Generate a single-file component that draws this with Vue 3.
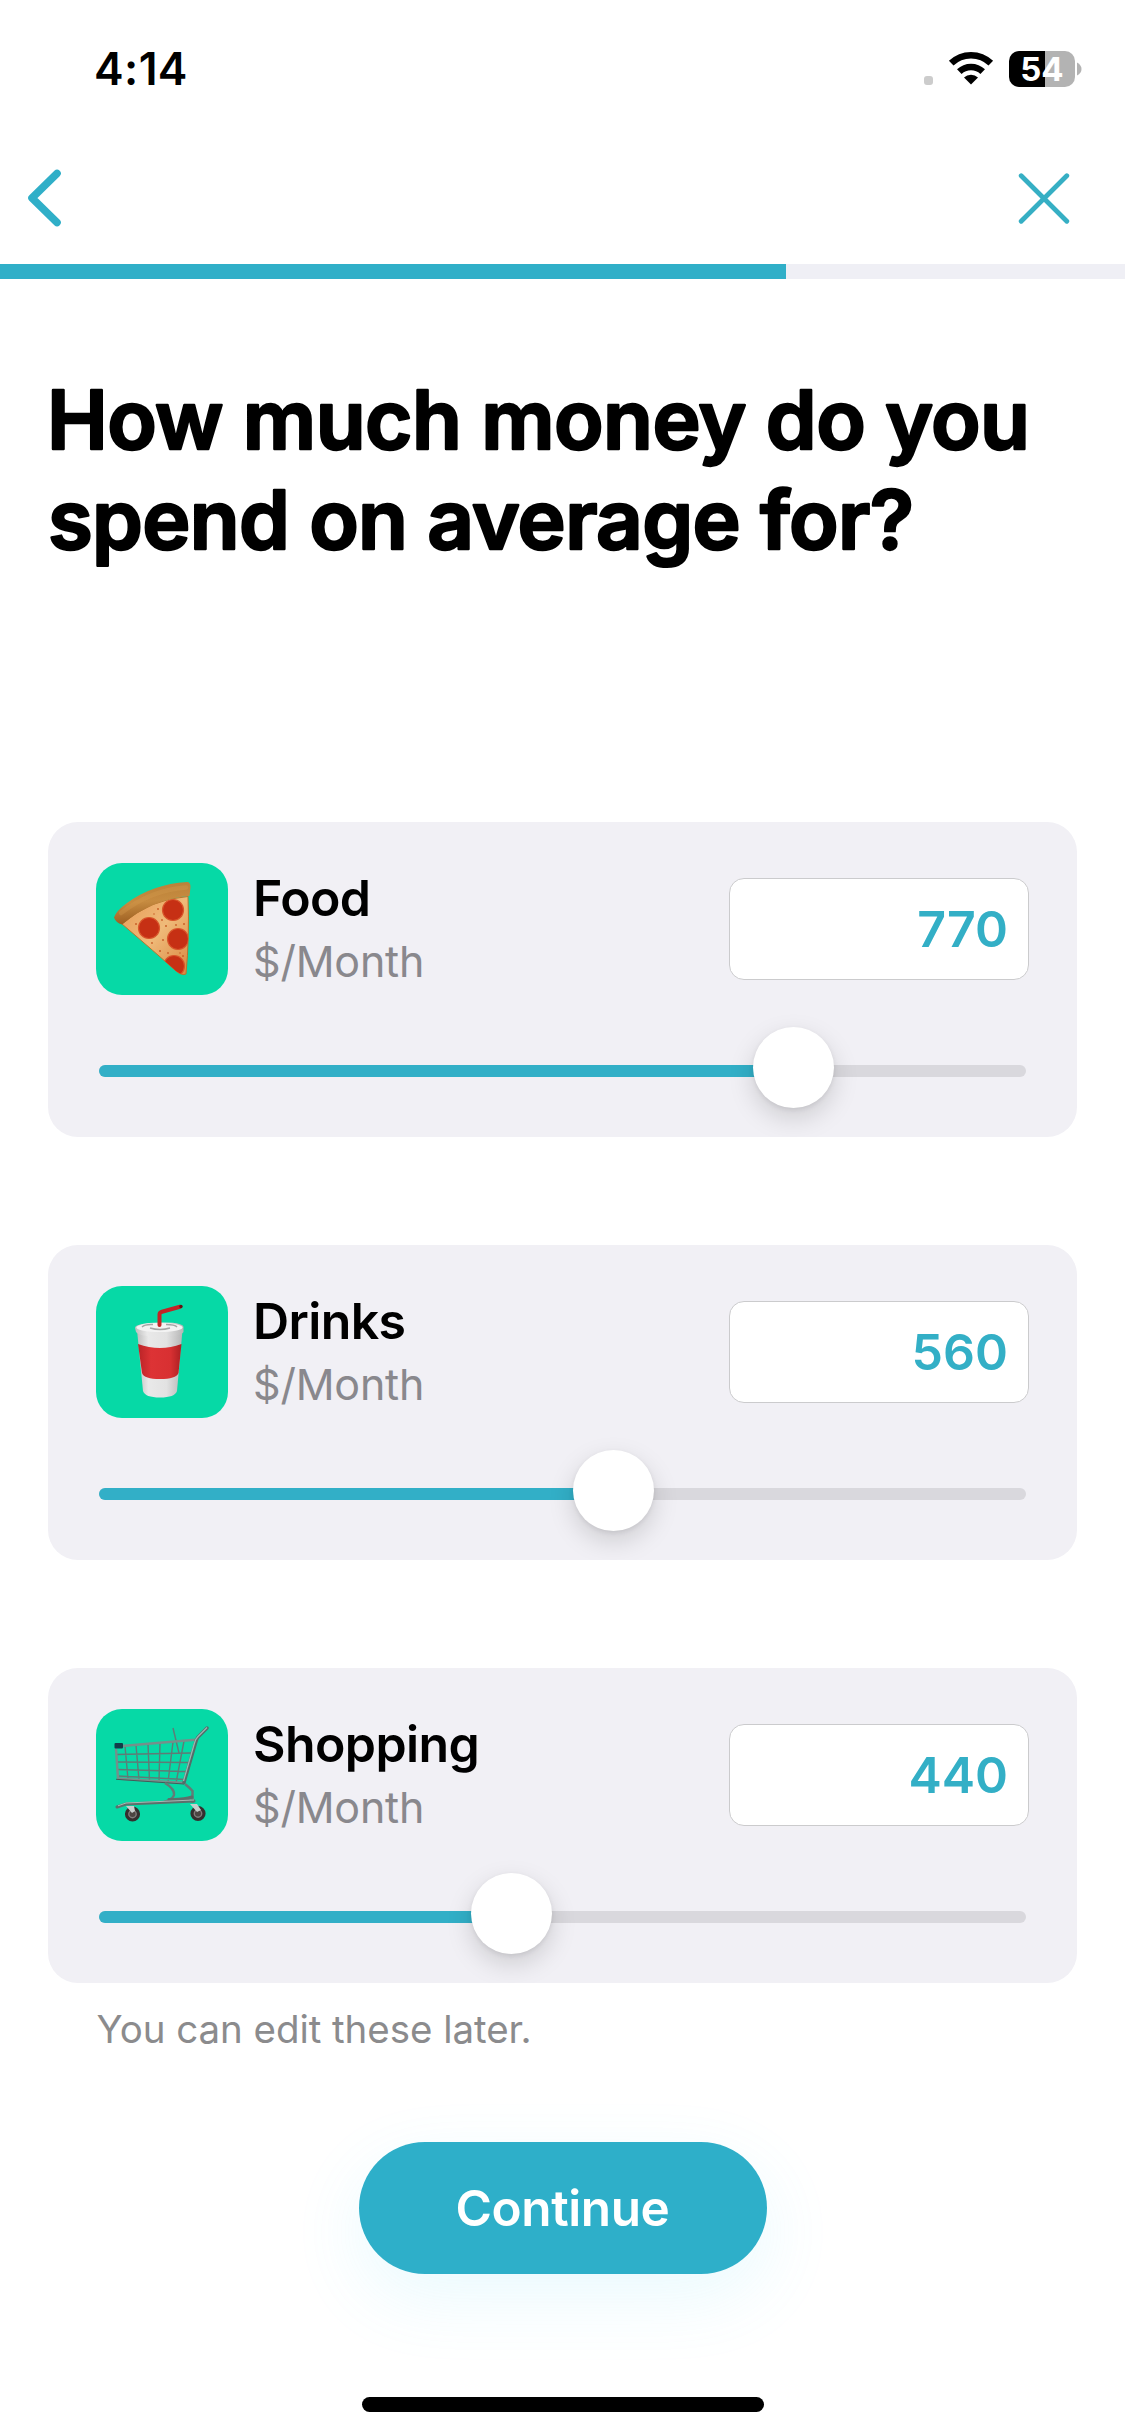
<script setup>
const items = [
  { id: 'food', name: 'Food', amount: 770, position: 74.92 },
  { id: 'drinks', name: 'Drinks', amount: 560, position: 55.5 },
  { id: 'shopping', name: 'Shopping', amount: 440, position: 44.5 },
]
</script>

<template>
  <div class="screen">
    <header class="status">
      <span class="time">4:14</span>
      <div class="indicators">
        <i class="signal"></i>
        <svg class="wifi" viewBox="0 0 46 34" width="46" height="34">
          <path d="M3.2 12.2A28.5 28.5 0 0 1 42.8 12.2M11.3 20.6A17 17 0 0 1 34.7 20.6" fill="none" stroke="#000" stroke-width="6.6" />
          <path d="M23 33.5 16 26.6A10 10 0 0 1 30 26.6Z" />
        </svg>
        <div class="battery">
          <div class="level"><b>54</b></div>
          <svg viewBox="0 0 5 14" width="5" height="14"><path d="M0 0.5Q4.500 3 4.500 7T0 13.5Z" fill="#b3b3b3" /></svg>
        </div>
      </div>
    </header>

    <nav class="nav">
      <svg viewBox="0 0 40 64" width="40" height="64"><path d="M33 7.5 8 32 33 56.5" fill="none" stroke="#30afc8" stroke-width="7.6" stroke-linecap="round" stroke-linejoin="round" /></svg>
      <svg viewBox="0 0 52 52" width="52" height="52"><path d="M3.2 3.7 48.8 49.3M48.8 3.7 3.2 49.3" stroke="#36afc4" stroke-width="4.8" stroke-linecap="round" /></svg>
    </nav>

    <div class="progress"><div class="progress-fill"></div></div>

    <h1 class="title">
      <svg viewBox="0 0 1029 220" width="1029" height="220">
        <text x="-1" y="67.500" textLength="983">How much money do you</text>
        <text x="0" y="167.500" textLength="866">spend on average for?</text>
      </svg>
    </h1>

    <main class="cards">
      <section v-for="item in items" :key="item.id" class="card">
        <div class="row">
          <div class="tile">
            <svg v-if="item.id === 'food'" viewBox="0 0 132 132" width="132" height="132">
              <defs>
                <linearGradient id="crust" x1="0.4" y1="0" x2="0.55" y2="1">
                  <stop offset="0" stop-color="#b98037" /><stop offset="0.45" stop-color="#c68b40" /><stop offset="1" stop-color="#96581d" />
                </linearGradient>
                <linearGradient id="cheese" x1="0" y1="0" x2="1" y2="1">
                  <stop offset="0" stop-color="#e79a55" /><stop offset="0.5" stop-color="#efba79" /><stop offset="1" stop-color="#d98740" />
                </linearGradient>
                <clipPath id="slice"><path d="M26 61Q54 36 92 33.500Q93.500 75 90 111Q86 112 80 108Q60 90 26 61Z" /></clipPath>
              </defs>
              <path d="M26 61Q54 36 92 33.500Q93.500 75 90 111Q86 113 80 108Q60 90 26 61Z" fill="url(#cheese)" stroke="#b8752e" stroke-width="1" />
              <g clip-path="url(#slice)">
                <g fill="#c63014" stroke="#d9562b" stroke-width="1.200">
                  <circle cx="77" cy="47" r="10.500" /><circle cx="53" cy="65" r="10.500" /><circle cx="82" cy="76" r="10.500" /><circle cx="78" cy="103" r="10.500" />
                </g>
                <g fill="#c9622a">
                  <circle cx="62" cy="46" r="1" /><circle cx="66" cy="57" r="0.900" /><circle cx="70" cy="63" r="1" /><circle cx="58" cy="51" r="0.800" /><circle cx="67" cy="77" r="1" /><circle cx="64" cy="88" r="1.100" /><circle cx="72" cy="90" r="0.900" /><circle cx="87" cy="93" r="1" /><circle cx="88" cy="61" r="1" /><circle cx="40" cy="61" r="1" /><circle cx="80" cy="62" r="0.900" /><circle cx="56" cy="80" r="0.900" /><circle cx="84" cy="90" r="0.800" />
                </g>
              </g>
              <path d="M18 54.500Q20 48 31 40Q57 21 91 19Q94.500 19 94.500 24L93.500 33Q57 35.500 26 61.500Q20 60 18 54.500Z" fill="url(#crust)" />
              <path d="M25 50Q55 27 90 24.500" fill="none" stroke="#d39a4e" stroke-width="4.500" stroke-linecap="round" opacity="0.350" />
            </svg>

            <svg v-else-if="item.id === 'drinks'" viewBox="0 0 132 132" width="132" height="132">
              <defs>
                <linearGradient id="cup" x1="0" x2="1">
                  <stop offset="0" stop-color="#bdbdbd" /><stop offset="0.250" stop-color="#e9e9e9" /><stop offset="0.650" stop-color="#e2e2e2" /><stop offset="1" stop-color="#b5b5b5" />
                </linearGradient>
                <linearGradient id="sleeve" x1="0" x2="1">
                  <stop offset="0" stop-color="#b92427" /><stop offset="0.300" stop-color="#dd3335" /><stop offset="0.750" stop-color="#d83032" /><stop offset="1" stop-color="#ab2022" />
                </linearGradient>
              </defs>
              <path d="M41 44 47 105Q49 111.500 64 111.500T81 105L86.500 44Z" fill="url(#cup)" />
              <path d="M42 58Q64 66 85.500 58L82.500 87Q80 93 64 93T46 87Z" fill="url(#sleeve)" />
              <path d="M39 42Q39 37 64 36.500T87.500 42V46Q85 50.500 64 50.500T40 46Z" fill="url(#cup)" />
              <ellipse cx="63.500" cy="41.500" rx="23" ry="4.500" fill="#f3f3f3" />
              <path d="M46 41Q49 38 57 38.500M70 38.500Q79 38.500 81 41M54 42Q64 45 74 42" fill="none" stroke="#a5a5a5" stroke-width="1.400" />
              <path d="M63.500 39V28.500Q63.500 26.500 66 25.800L84 20.800" fill="none" stroke="#c32426" stroke-width="4" stroke-linecap="round" />
              <circle cx="85" cy="20.500" r="1.700" fill="#611" />
            </svg>

            <svg v-else viewBox="0 0 132 132" width="132" height="132" fill="none">
              <g stroke="#5f7b76" stroke-width="1.400">
                <path d="M20 45.500 95 44M21 53 93 53.500M21 60.500 91 62.500M22 67 89 70.500M29 37 32 70M40 36 43 71M52 35 53.500 71.500M64 34 63 72M77 33 72 73M88 32 80 74" />
                <path d="M77 19 83 44" />
              </g>
              <path d="M20 37.500 102 30.500M20 40 22 69.500 88 74" stroke="#758f8b" stroke-width="2.400" />
              <path d="M20 70.300 88 75" stroke="#394d4a" stroke-width="0.800" />
              <path d="M111 19 102 28Q100.500 30 99.500 34L88 73.500" stroke="#546c69" stroke-width="3.400" stroke-linecap="round" />
              <path d="M111 18.500 102 27.500Q99.500 30 98.500 34L87.500 72" stroke="#9cb5b1" stroke-width="1.300" />
              <path d="M69 74Q79 80 78 86Q77 90 68 93M89 75Q94 79 96.500 82L96.500 94" stroke="#627c77" stroke-width="2.500" />
              <path d="M96 88Q88 91 73 90.500M21 98 30 95 98 92" stroke="#5c6f6b" stroke-width="3" stroke-linecap="round" />
              <path d="M22 96.800 30 94 98 91" stroke="#a9b9b6" stroke-width="1" />
              <g>
                <circle cx="36.500" cy="105" r="6" fill="#817c7b" stroke="#34302f" stroke-width="3.200" /><circle cx="36.500" cy="105" r="3" fill="#4b4542" />
                <circle cx="102" cy="104.500" r="6" fill="#817c7b" stroke="#34302f" stroke-width="3.200" /><circle cx="102" cy="104.500" r="3" fill="#4b4542" />
                <path d="M30 97H38L39 102 36 104ZM94 95H101L105 101 101 103Z" fill="#c8cfcd" />
              </g>
              <rect x="18.500" y="34" width="8.500" height="5.500" rx="1" fill="#123c49" />
            </svg>
          </div>
          <div class="labels">
            <span class="name">{{ item.name }}</span>
            <span class="unit">$/Month</span>
          </div>
          <div class="amount"><span>{{ item.amount }}</span></div>
        </div>
        <div class="slider">
          <div class="slider-fill" :style="{ width: item.position + '%' }"></div>
          <div class="knob" :style="{ left: item.position + '%' }"></div>
        </div>
      </section>
    </main>

    <p class="note">You can edit these later.</p>
    <button class="cta"><span>Continue</span></button>
    <div class="home"></div>
  </div>
</template>

<style>
body { background: #fff; }
</style>

<style scoped>
.screen { box-sizing: border-box; display: flex; flex-direction: column; width: 1125px; height: 2436px; overflow: hidden; background: #fff; color: #000; font-family: Inter, "Liberation Sans", sans-serif; }
.screen svg { display: block; flex: none; }
.status { display: flex; justify-content: space-between; height: 138px; flex: none; padding: 0 43px 0 94px; }
.time { margin-top: 42px; font-size: 44.5px; line-height: 54px; font-weight: 600; letter-spacing: 0.4px; }
.indicators { display: flex; align-items: flex-start; }
.signal { width: 9px; height: 9px; margin: 76px 15px 0 0; border-radius: 3px; background: #ccc; }
.wifi { margin: 51px 15px 0 0; }
.battery { display: flex; align-items: center; gap: 2px; margin-top: 51px; }
.level { display: flex; align-items: center; justify-content: center; width: 66px; height: 36px; border-radius: 10px; background: linear-gradient(90deg, #000 36px, #b3b3b3 36px); color: #fff; }
.level b { font-size: 33px; line-height: 36px; font-weight: 700; }
.nav { display: flex; justify-content: space-between; align-items: center; height: 120px; flex: none; padding: 0 55px 0 24px; margin-bottom: 6px; }
.progress { height: 15px; flex: none; background: #efeff5; }
.progress-fill { width: 786px; height: 15px; background: #30afc8; }
.title { height: 220px; margin: 102px 48px 0; }
.title svg { overflow: visible; }
.title text { font-size: 81.5px; font-weight: 600; fill: #000; stroke: #000; stroke-width: 2.4px; stroke-linejoin: round; stroke-linecap: round; }
.cards { display: flex; flex-direction: column; gap: 108px; margin: 221px 48px 0; }
.card { box-sizing: border-box; height: 315px; padding: 41px 48px 0; border-radius: 30px; background: #f1f0f5; overflow: hidden; }
.row { display: flex; align-items: center; height: 132px; }
.tile { width: 132px; height: 132px; flex: none; border-radius: 26px; background: #06d9a6; overflow: hidden; }
.labels { display: flex; flex-direction: column; flex: 1; margin-left: 25px; }
.name { margin-top: -1px; padding-bottom: 1px; font-size: 50px; line-height: 64px; font-weight: 600; letter-spacing: -0.6px; }
.unit { font-size: 43px; line-height: 60px; letter-spacing: -0.2px; color: #89888d; }
.amount { box-sizing: border-box; display: flex; align-items: center; justify-content: flex-end; width: 300px; height: 102px; padding-right: 20px; border: 1px solid #cbcbcd; border-radius: 15px; background: #fff; color: #33afc6; font-size: 50px; font-weight: 600; }
.slider { position: relative; height: 12px; margin: 70px 3px 0; border-radius: 6px; background: #d9d8dd; }
.slider-fill { height: 12px; border-radius: 6px 0 0 6px; background: #32afc7; }
.knob { position: absolute; top: -38px; width: 81px; height: 81px; margin-left: -40.5px; border-radius: 50%; background: #fff; box-shadow: 0 10px 26px rgba(0, 0, 0, 0.15), 0 2px 5px rgba(0, 0, 0, 0.08); }
.note { margin: 19px 96.5px 0; font-size: 38.5px; line-height: 54px; letter-spacing: -0.05px; color: #8b8b8d; }
.cta { display: flex; align-items: center; justify-content: center; width: 408px; height: 132px; flex: none; margin: 86px auto 0; padding: 0; border: 0; border-radius: 66px; background: #2eafc9; color: #fff; font: 600 49.5px Inter, sans-serif; letter-spacing: -0.4px; box-shadow: 0 24px 70px rgba(80, 215, 245, 0.12); }
.home { width: 402px; height: 15px; flex: none; margin: 123px auto 0; border-radius: 8px; background: #000; }
</style>
